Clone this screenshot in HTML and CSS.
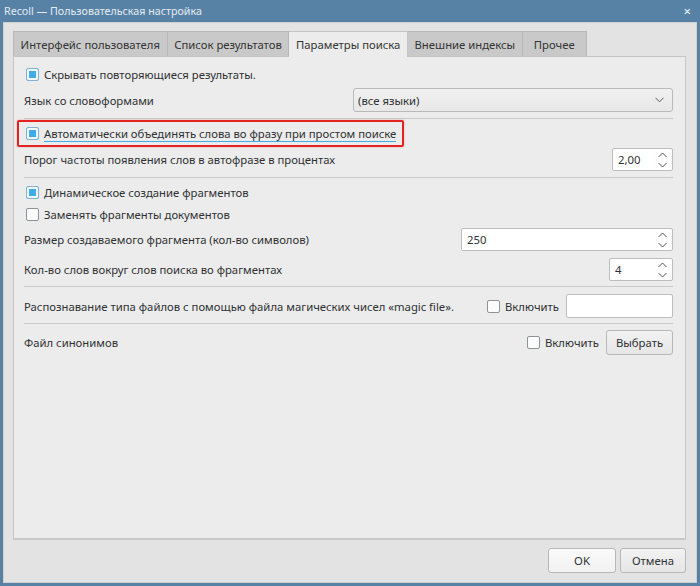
FILE: index.html
```html
<!DOCTYPE html>
<html lang="ru">
<head>
<meta charset="utf-8">
<title>Recoll — Пользовательская настройка</title>
<link rel="stylesheet" href="styles.css">
</head>
<body>
<div class="window">
  <div class="titlebar">
    <span class="title">Recoll — Пользовательская настройка</span>
    <span class="close">×</span>
  </div>
  <div class="client">
    <div class="tabs">
      <div class="tab">Интерфейс пользователя</div>
      <div class="tab">Список результатов</div>
      <div class="tab active">Параметры поиска</div>
      <div class="tab">Внешние индексы</div>
      <div class="tab last">Прочее</div>
    </div>
    <div class="panel">
      <div class="row r1">
        <label class="check"><span class="box checked"></span>Скрывать повторяющиеся результаты.</label>
      </div>
      <div class="row r2">
        <span class="label">Язык со словоформами</span>
        <div class="combo"><span>(все языки)</span>
          <svg class="chev" width="9" height="6" viewBox="0 0 9 6"><path d="M0.5 0.8 L4.5 4.8 L8.5 0.8" fill="none" stroke="#555" stroke-width="1"/></svg>
        </div>
      </div>
      <div class="sep s1"></div>
      <div class="row r3">
        <label class="check focus"><span class="box checked"></span><span class="ftext">Автоматически объединять слова во фразу при простом поиске</span></label>
        <div class="highlight"></div>
      </div>
      <div class="row r4">
        <span class="label">Порог частоты появления слов в автофразе в процентах</span>
        <div class="spin w60"><span>2,00</span>
          <svg class="arrows" width="9" height="16" viewBox="0 0 9 16"><path d="M0.5 5 L4.5 1 L8.5 5 M0.5 11 L4.5 15 L8.5 11" fill="none" stroke="#555" stroke-width="1"/></svg>
        </div>
      </div>
      <div class="sep s2"></div>
      <div class="row r5">
        <label class="check"><span class="box checked"></span>Динамическое создание фрагментов</label>
      </div>
      <div class="row r6">
        <label class="check"><span class="box"></span>Заменять фрагменты документов</label>
      </div>
      <div class="row r7">
        <span class="label">Размер создаваемого фрагмента (кол-во символов)</span>
        <div class="spin w212"><span>250</span>
          <svg class="arrows" width="9" height="16" viewBox="0 0 9 16"><path d="M0.5 5 L4.5 1 L8.5 5 M0.5 11 L4.5 15 L8.5 11" fill="none" stroke="#555" stroke-width="1"/></svg>
        </div>
      </div>
      <div class="row r8">
        <span class="label">Кол-во слов вокруг слов поиска во фрагментах</span>
        <div class="spin w64"><span>4</span>
          <svg class="arrows" width="9" height="16" viewBox="0 0 9 16"><path d="M0.5 5 L4.5 1 L8.5 5 M0.5 11 L4.5 15 L8.5 11" fill="none" stroke="#555" stroke-width="1"/></svg>
        </div>
      </div>
      <div class="sep s3"></div>
      <div class="row r9">
        <span class="label">Распознавание типа файлов с помощью файла магических чисел «magic file».</span>
        <div class="right">
          <label class="check small"><span class="box"></span>Включить</label>
          <div class="field"></div>
        </div>
      </div>
      <div class="sep s4"></div>
      <div class="row r10">
        <span class="label">Файл синонимов</span>
        <div class="right">
          <label class="check small"><span class="box"></span>Включить</label>
          <button class="btn choose">Выбрать</button>
        </div>
      </div>
    </div>
    <div class="buttons">
      <button class="btn ok">OK</button>
      <button class="btn cancel">Отмена</button>
    </div>
  </div>
</div>
</body>
</html>
```

FILE: styles.css
```css
* { box-sizing: border-box; }
html, body {
  margin: 0;
  padding: 0;
}
body {
  width: 700px;
  height: 586px;
  background: #5782a6;
  font-family: "Noto Sans", "DejaVu Sans", sans-serif;
  font-size: 11.3px;
  color: #2e3133;
  overflow: hidden;
}
.window {
  display: flex;
  flex-direction: column;
  height: 586px;
}
.titlebar {
  height: 22px;
  display: flex;
  align-items: center;
  justify-content: space-between;
  padding: 0 9px 0 4px;
  color: #e4ebf1;
  font-size: 10.7px;
}
.close {
  font-size: 13px;
  color: #f0f4f7;
}
.client {
  flex: 1;
  margin: 0 3px 3px 3px;
  background: #e3e3e3;
  border: 1px solid #d0d0d0;
  padding: 8px 10px 0 9px;
  display: flex;
  flex-direction: column;
}
.tabs {
  display: flex;
  height: 25px;
  position: relative;
  z-index: 1;
}
.tab {
  height: 25px;
  padding: 0 6.6px;
  display: flex;
  align-items: center;
  background: #c9c9c9;
  border: 1px solid #b8b8b8;
  border-bottom: none;
  border-left: none;
  color: #333;
  white-space: nowrap;
}
.tab:first-child { border-left: 1px solid #b8b8b8; }
.tab.last { padding: 0 11px; }
.tab.active {
  background: #ececec;
  height: 26px;
  border-color: #c4c4c4;
}
.panel {
  width: 673px;
  height: 484px;
  background: #ececec;
  border: 1px solid #c4c4c4;
  border-right-color: #c8c8c8;
  border-bottom: 2px solid #c8c8c8;
  padding: 6px 12px 0 10px;
  display: flex;
  flex-direction: column;
}
.row {
  display: flex;
  align-items: center;
  justify-content: space-between;
  position: relative;
}
.r1 { height: 22px; }
.r2 { height: 24px; margin-top: 3px; }
.r3 { height: 27px; margin-top: 1px; }
.r4 { height: 23px; margin-top: 1px; }
.r5 { height: 22px; margin-top: 3px; }
.r6 { height: 22px; }
.r7 { height: 23px; margin-top: 3px; }
.r8 { height: 23px; margin-top: 7px; }
.r9 { height: 24px; margin-top: 7px; }
.r10 { height: 25px; margin-top: 6px; }
.sep {
  height: 1px;
  background: #c9c9c9;
}
.s1 { margin-top: 6px; }
.s2 { margin-top: 6px; }
.s3 { margin-top: 5px; }
.s4 { margin-top: 5px; }
.check {
  display: flex;
  align-items: center;
  white-space: nowrap;
}
.box {
  width: 13px;
  height: 13px;
  border: 1px solid #8e9396;
  border-radius: 2px;
  background: #fcfcfc;
  margin: 0 5px 0 2px;
  flex: none;
}
.box.checked {
  border-color: #7eb3d6;
  background: #3daee9;
  box-shadow: inset 0 0 0 2px #f4f8fb;
}
.check.small .box { margin-left: 0; }
.ftext {
  border-bottom: 1px solid #3daee9;
  line-height: 14px;
  padding-top: 1px;
}
.highlight {
  position: absolute;
  left: -7px;
  top: 0;
  width: 387px;
  height: 27px;
  border: 2px solid #e2231f;
  border-radius: 2px;
  box-shadow: 0 0 2px rgba(226,35,31,0.35);
  pointer-events: none;
}
.label { white-space: nowrap; }
.combo {
  width: 320px;
  height: 24px;
  border: 1px solid #b9b9b9;
  border-radius: 3px;
  background: linear-gradient(#f0f0f0, #e8e8e8);
  display: flex;
  align-items: center;
  justify-content: space-between;
  padding: 0 8px 0 4px;
}
.spin {
  height: 23px;
  border: 1px solid #bdbdbd;
  border-radius: 2px;
  background: #ffffff;
  display: flex;
  align-items: center;
  justify-content: space-between;
  padding: 0 5px 0 5px;
}
.w60 { width: 61px; }
.w212 { width: 212px; }
.w64 { width: 64px; }
.right {
  display: flex;
  align-items: center;
}
.right .check { margin-right: 7px; }
.field {
  width: 107px;
  height: 24px;
  flex: none;
  background: #fff;
  border: 1px solid #bdbdbd;
  border-radius: 2px;
}
.btn {
  font-family: inherit;
  font-size: inherit;
  color: #2e3133;
  height: 25px;
  border: 1px solid #b8b8b8;
  border-radius: 3px;
  background: linear-gradient(#f2f2f2, #e6e6e6);
  padding: 0;
  flex: none;
}
.choose { width: 67px; }
.buttons {
  display: flex;
  justify-content: flex-end;
  gap: 4px;
  margin-top: 8px;
  padding-right: 0;
}
.ok {
  width: 68px;
  background: linear-gradient(#fafafa, #f1f1f1);
}
.cancel { width: 66px; }
```
